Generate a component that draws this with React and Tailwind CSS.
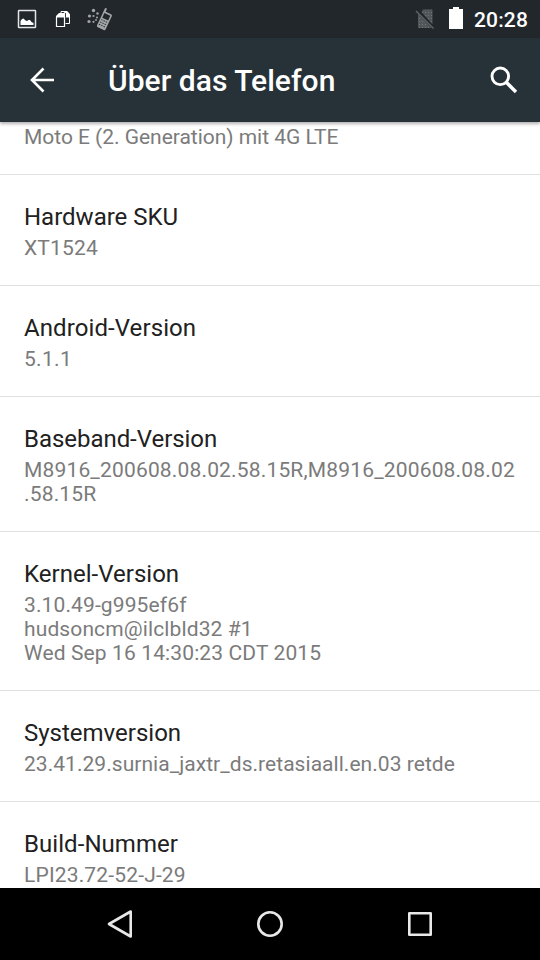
import React from 'react';

const entries = [
  { lines: ['Moto E (2. Generation) mit 4G LTE'], tracking: 'tracking-[-0.03px]' },
  { title: 'Hardware SKU', lines: ['XT1524'], tracking: 'tracking-[0.17px]' },
  { title: 'Android-Version', lines: ['5.1.1'], tracking: 'tracking-[0.3px]', titleTracking: 'tracking-[0.09px]' },
  { title: 'Baseband-Version', lines: ['M8916_200608.08.02.58.15R,M8916_200608.08.02', '.58.15R'], tracking: 'tracking-[0.165px]', titleTracking: 'tracking-[-0.04px]' },
  { title: 'Kernel-Version', lines: ['3.10.49-g995ef6f', 'hudsoncm@ilclbld32 #1', 'Wed Sep 16 14:30:23 CDT 2015'], tracking: 'tracking-[0.12px]', titleTracking: 'tracking-[0.02px]' },
  { title: 'Systemversion', lines: ['23.41.29.surnia_jaxtr_ds.retasiaall.en.03 retde'], tracking: 'tracking-[0.04px]' },
  { title: 'Build-Nummer', lines: ['LPI23.72-52-J-29'], tracking: 'tracking-[0.16px]', titleTracking: 'tracking-[0.06px]' },
];

const PictureIcon = () => (
  <svg width="20" height="20" viewBox="0 0 20 20" fill="none">
    <rect x="1.500" y="1.500" width="17" height="17" rx="0.5" stroke="#e4e5e6" strokeWidth="1.500" />
    <path d="M3.500 16v-4l1.500-2 1.500-.5 2 2 1.500.5 1.500-1 1.500 0 1.500 2 2 1V16z" fill="#fff" />
  </svg>
);

const FilesIcon = () => (
  <svg width="16" height="18" viewBox="0 0 16 18" fill="none">
    <path d="M6 3V1.500h6l2.500 3V13.500H10.500" stroke="#fff" strokeWidth="1" />
    <path d="M7 1h5l3 3.500V7.500h-4.500V3.500z" fill="#fff" />
    <path d="M1.500 7V16.500H9.500V7" stroke="#fff" strokeWidth="1.200" />
    <path d="M4 3h6v4.500H1V6z" fill="#fff" />
    <path d="M10.500 3v4.500" stroke="#21272b" strokeWidth="0.800" />
  </svg>
);

const ShakeIcon = () => (
  <svg width="26" height="24" viewBox="0 0 26 24">
    <g fill="#a3a6a7">
      <circle cx="6.500" cy="3.500" r="1.700" />
      <circle cx="10.500" cy="6.500" r="1.200" />
      <circle cx="2.500" cy="9" r="1.600" />
      <circle cx="6.500" cy="9" r="1.100" />
      <circle cx="10" cy="10.500" r="1" />
      <circle cx="2" cy="14.500" r="1.600" />
      <circle cx="6.500" cy="14.800" r="1.100" />
      <circle cx="9" cy="13" r="0.900" />
    </g>
    <g transform="rotate(25 17.500 13)">
      <rect x="13" y="5" width="9.500" height="17.500" rx="1.500" fill="#a3a6a7" />
      <rect x="13" y="1.500" width="2" height="5" rx="1" fill="#a3a6a7" />
      <rect x="14.500" y="6.800" width="6.500" height="5" fill="#21272b" />
      <path d="M14.300 14h1.500m1 0h1.500m1 0h1.500m-6.500 2.600h1.500m1 0h1.500m1 0h1.500m-6.500 2.600h1.500m1 0h1.500m1 0h1.500" stroke="#21272b" strokeWidth="0.900" />
    </g>
  </svg>
);

const NoSimIcon = () => (
  <svg width="20" height="22" viewBox="0 0 20 22">
    <defs>
      <pattern id="dots" width="3" height="3" patternUnits="userSpaceOnUse">
        <rect width="3" height="3" fill="#515659" />
        <rect x="1" y="1" width="1" height="1" fill="#73777a" />
      </pattern>
    </defs>
    <path d="M8 1.500h8.500q1 0 1 1v14L6.500 4z" fill="url(#dots)" />
    <path d="M3 6l13.500 14H4q-1 0-1-1z" fill="url(#dots)" />
    <path d="M2 2.500l17 17" stroke="#21272b" strokeWidth="1.300" />
    <path d="M1 3l17.500 17.500" stroke="#606467" strokeWidth="1.400" />
  </svg>
);

const StatusBar = () => (
  <div className="h-[38px] shrink-0 bg-[#21272b] flex items-center justify-between pl-[17px] pr-[12px]">
    <div className="flex items-center">
      <PictureIcon />
      <div className="ml-[18px]"><FilesIcon /></div>
      <div className="ml-[16px]"><ShakeIcon /></div>
    </div>
    <div className="flex items-center text-white">
      <NoSimIcon />
      <svg className="ml-[14px] mb-[2px]" width="14" height="22" viewBox="0 0 14 22">
        <path d="M4 0h6v2h4v20H0V2h4z" fill="#fff" />
      </svg>
      <span className="ml-[11px] pt-[2px] text-[21px] leading-[24px] font-medium tracking-[0.15px]">20:28</span>
    </div>
  </div>
);

const Toolbar = () => (
  <header className="relative z-10 h-[84px] shrink-0 bg-[#263238] flex items-center pl-[30px] pr-[22px] text-white shadow-[0_2px_3px_rgba(0,0,0,0.3)]">
    <svg width="26" height="26" viewBox="0 0 26 26" fill="none" stroke="#fff" strokeWidth="2.600">
      <path d="M13.500 1.500 2 13l11.500 11.500M2 13h22" />
    </svg>
    <h1 className="ml-[52px] pt-[2px] flex-1 text-[30px] leading-[36px] font-medium tracking-[0.03px]">Über das Telefon</h1>
    <svg width="28" height="28" viewBox="0 0 28 28" fill="none" stroke="#fff">
      <circle cx="10.300" cy="10.300" r="8.300" strokeWidth="2.900" />
      <path d="M16.500 16.500l9.500 9.500" strokeWidth="3.400" />
    </svg>
  </header>
);

const Entry = ({ title, lines, tracking, titleTracking }) => (
  <li className="border-b border-[#e0e0e0] pb-[25px] px-6 whitespace-nowrap">
    {title && (
      <h2 className={`pt-[26px] pb-[3px] text-[24px] leading-[32px] text-[#212121] ${titleTracking || ''}`}>{title}</h2>
    )}
    {lines.map((line) => (
      <p key={line} className={`text-[21px] leading-[24px] text-[#7b7b7b] ${tracking}`}>{line}</p>
    ))}
  </li>
);

const NavBar = () => (
  <nav className="h-[72px] shrink-0 bg-black flex items-center justify-center gap-[120px]">
    <svg width="30" height="30" viewBox="0 0 30 30" fill="none" stroke="#e8e8e8" strokeWidth="2.600" strokeLinejoin="round">
      <path d="M25.700 2.500V27.500L4 15z" />
    </svg>
    <svg width="30" height="30" viewBox="0 0 30 30" fill="none" stroke="#e8e8e8" strokeWidth="2.600">
      <circle cx="15" cy="15" r="11.700" />
    </svg>
    <svg width="30" height="30" viewBox="0 0 30 30" fill="none" stroke="#e8e8e8" strokeWidth="2.600" strokeLinejoin="round">
      <rect x="4.300" y="4.300" width="21.400" height="21.400" />
    </svg>
  </nav>
);

const App = () => {
  return (
    <div className="w-[540px] h-[960px] flex flex-col overflow-hidden bg-white font-['Roboto',sans-serif]">
      <StatusBar />
      <Toolbar />
      <main className="flex-1 min-h-0 overflow-hidden">
        <ul className="pt-[3px]">
          {entries.map((entry) => (
            <Entry key={entry.lines[0]} {...entry} />
          ))}
        </ul>
      </main>
      <NavBar />
    </div>
  );
};

export default App;
